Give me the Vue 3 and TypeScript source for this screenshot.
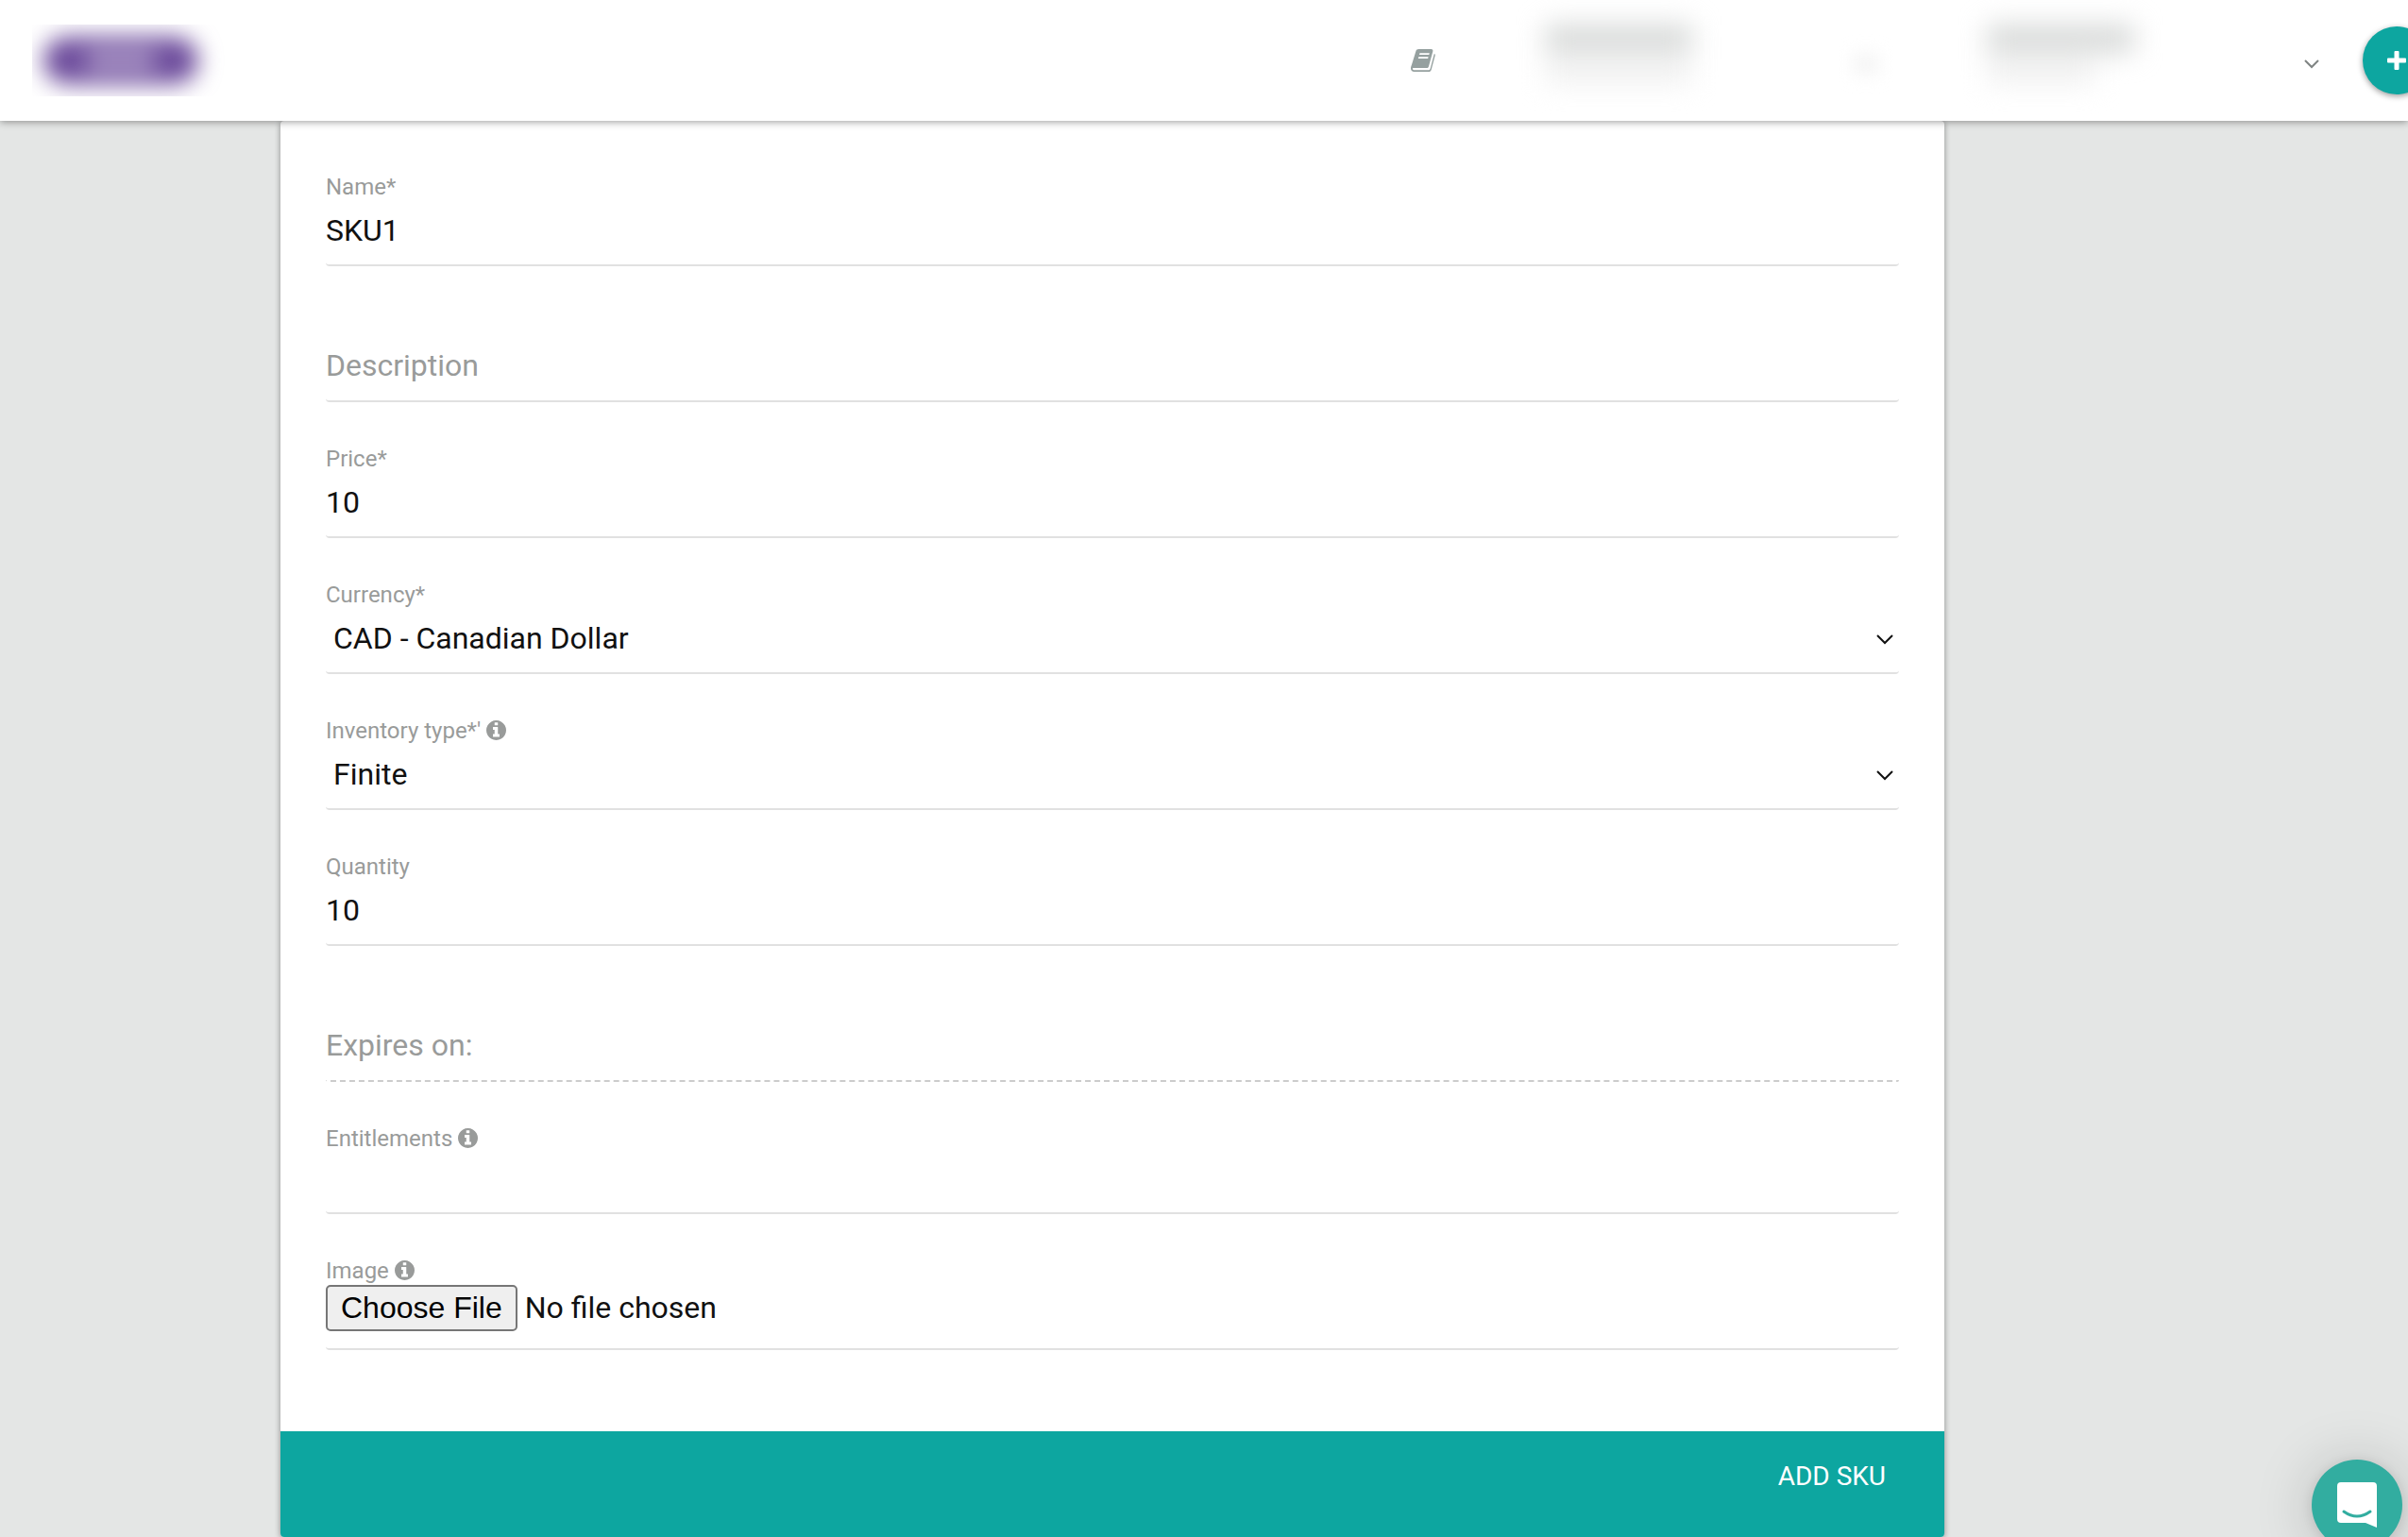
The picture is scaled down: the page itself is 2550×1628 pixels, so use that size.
<script setup lang="ts">
import { ref } from 'vue'

interface Field {
  id: string
  label: string
  kind: 'text' | 'select' | 'file'
  value?: string
  info?: boolean
  floating?: boolean
  modifier?: string
}

const fields = ref<Field[]>([
  { id: 'name', label: 'Name*', kind: 'text', value: 'SKU1' },
  { id: 'description', label: 'Description', kind: 'text', value: '', floating: true },
  { id: 'price', label: 'Price*', kind: 'text', value: '10' },
  { id: 'currency', label: 'Currency*', kind: 'select', value: 'CAD - Canadian Dollar' },
  { id: 'inventory', label: "Inventory type*'", kind: 'select', value: 'Finite', info: true },
  { id: 'quantity', label: 'Quantity', kind: 'text', value: '10' },
  { id: 'expires', label: 'Expires on:', kind: 'text', value: '', floating: true, modifier: 'dashed' },
  { id: 'entitlements', label: 'Entitlements', kind: 'text', value: '', info: true, modifier: 'short' },
  { id: 'image', label: 'Image', kind: 'file', info: true },
])
</script>

<template>
  <div class="page">
    <header class="topbar">
      <div class="logo" aria-label="Logo"><span class="logo-pill"><span class="logo-mark"></span></span></div>
      <nav class="tools">
        <a class="docs" href="#" aria-label="Documentation">
          <svg viewBox="0 0 26 24" width="26" height="24">
            <path fill="#95a09f" fill-rule="evenodd" d="M8.500 0H21.500C23 0 23.700 1 23.300 2.400L19 18.200C18.600 19.500 18 20 16.700 20H3C2 20 1.700 20.500 2 21.200C2.300 22 3 22.300 4 22.300H18.500C19.700 22.300 20.300 21.800 20.700 20.500L24.800 5C25.800 5.400 26 6 25.700 7L21.800 21.400C21.300 23.200 20.300 24 18.700 24H3.600C1.500 24 0 22.500 0 20.400C0 19 .5 18 .9 16.800L5.300 2.400C5.800 .8 6.800 0 8.500 0ZM9.500 4.200L9 6H19.300L19.800 4.200ZM8.300 8.200L7.800 10H18.100L18.600 8.200Z" />
          </svg>
        </a>
        <div class="account" aria-hidden="true">
          <div class="redacted"><i class="bar"></i><i class="bar thin"></i></div>
          <i class="dot"></i>
        </div>
        <div class="account">
          <div class="redacted" aria-hidden="true"><i class="bar"></i><i class="bar thin narrow"></i></div>
          <button class="toggle" type="button" aria-label="Open account menu">
            <svg viewBox="0 0 16 10" width="16" height="10"><path d="M1 1l7 7 7-7" fill="none" stroke="#7f8483" stroke-width="2" /></svg>
          </button>
        </div>
        <button class="create" type="button" aria-label="Create">
          <svg viewBox="0 0 20 20" width="20" height="20"><path fill="#fff" d="M8.500 0h3q1 0 1 1v6.500H19q1 0 1 1v3q0 1-1 1h-6.500V19q0 1-1 1h-3q-1 0-1-1v-6.500H1q-1 0-1-1v-3q0-1 1-1h6.500V1q0-1 1-1z" /></svg>
        </button>
      </nav>
    </header>

    <main class="content">
      <form class="card" @submit.prevent>
        <div class="fields">
          <div v-for="f in fields" :key="f.id" class="field" :class="[f.modifier, { floating: f.floating }]">
            <label v-if="!f.floating" class="label" :for="f.id">
              <span>{{ f.label }}</span>
              <svg v-if="f.info" class="info" viewBox="128 128 1536 1536" width="21" height="21">
                <path fill="currentColor" d="M1152 1376v-160q0-14-9-23t-23-9h-96v-512q0-14-9-23t-23-9h-320q-14 0-23 9t-9 23v160q0 14 9 23t23 9h96v320h-96q-14 0-23 9t-9 23v160q0 14 9 23t23 9h448q14 0 23-9t9-23zM1024 480v-160q0-14-9-23t-23-9h-192q-14 0-23 9t-9 23v160q0 14 9 23t23 9h192q14 0 23-9t9-23zM1664 896q0 209-103 385.500t-279.500 279.500-385.500 103-385.500-103-279.500-279.500-103-385.500 103-385.500 279.500-279.500 385.500-103 385.500 103 279.500 279.500 103 385.500z" />
              </svg>
            </label>
            <input
              v-if="f.kind === 'text'"
              :id="f.id"
              v-model="f.value"
              class="control"
              type="text"
              :placeholder="f.floating ? f.label : undefined"
              :aria-label="f.floating ? f.label : undefined"
            />
            <div v-else-if="f.kind === 'select'" class="select">
              <select :id="f.id" v-model="f.value" class="control">
                <option>{{ f.value }}</option>
              </select>
              <svg class="arrow" viewBox="0 0 18 11" width="18" height="11"><path d="M1 1l8 8 8-8" fill="none" stroke="#111" stroke-width="2" /></svg>
            </div>
            <input v-else :id="f.id" class="control file" type="file" />
          </div>
        </div>
        <footer class="actions">
          <button class="submit" type="submit">ADD SKU</button>
        </footer>
      </form>
    </main>

    <button class="messenger" type="button" aria-label="Open chat">
      <svg viewBox="0 0 42 48" width="42" height="48">
        <path fill="#fff" d="M4 0h34q4 0 4 4v44l-12-5H4q-4 0-4-4V4q0-4 4-4z" />
        <path d="M7 31q14 10 28 0" fill="none" stroke="#32ada0" stroke-width="3" stroke-linecap="round" />
      </svg>
    </button>
  </div>
</template>

<style>
body {
  margin: 0;
  background: #e4e6e5;
}
</style>

<style scoped>
.page {
  position: relative;
  height: 100vh;
  overflow: hidden;
  display: flex;
  flex-direction: column;
  font-family: Roboto, "Liberation Sans", sans-serif;
  color: #111;
  background: #e4e6e5;
}
.page *,
.page *::before {
  box-sizing: border-box;
}
button {
  border: 0;
  padding: 0;
  background: none;
  font: inherit;
}
.topbar {
  position: relative;
  z-index: 1;
  flex: none;
  height: 128px;
  display: flex;
  justify-content: space-between;
  align-items: center;
  padding-left: 34px;
  background: #fff;
  box-shadow: 0 1px 8px rgba(0, 0, 0, 0.4);
}
.logo {
  width: 206px;
  height: 76px;
  display: flex;
  align-items: center;
  padding: 0 12px;
  overflow: hidden;
}
.logo-pill {
  width: 164px;
  height: 50px;
  padding: 16px 46px;
  border-radius: 25px;
  background: #6d4c9c;
  filter: blur(12px);
}
.logo-mark {
  display: block;
  height: 18px;
  background: #b9a8d0;
}
.tools {
  display: flex;
  align-items: center;
}
.docs {
  display: flex;
  margin-right: 116px;
}
.account {
  width: 398px;
  height: 128px;
  display: flex;
  justify-content: space-between;
  align-items: center;
  padding-right: 46px;
}
.account + .account {
  margin-left: 70px;
}
.redacted {
  height: 76px;
  display: flex;
  flex-direction: column;
  gap: 8px;
  filter: blur(14px);
}
.bar {
  display: block;
  width: 156px;
  height: 30px;
  background: #d8dad9;
}
.thin {
  height: 24px;
  background: #f0f0f0;
}
.narrow {
  width: 116px;
}
.dot {
  width: 24px;
  height: 16px;
  margin-top: 8px;
  background: #eee;
  filter: blur(10px);
}
.toggle {
  display: flex;
  margin-top: 8px;
}
.create {
  width: 72px;
  height: 72px;
  margin-right: -24px;
  display: flex;
  justify-content: center;
  align-items: center;
  border-radius: 50%;
  background: #0da6a0;
  box-shadow: 0 2px 6px rgba(0, 0, 0, 0.4);
}
.content {
  flex: 1;
  display: flex;
  padding: 0 491px 0 297px;
}
.card {
  flex: 1;
  display: flex;
  flex-direction: column;
  align-self: flex-start;
  border-radius: 4px;
  background: #fff;
  box-shadow: 0 1px 6px rgba(0, 0, 0, 0.4);
}
.fields {
  padding: 10px 48px 86px;
}
.field {
  padding-top: 46px;
}
.floating {
  padding-top: 74px;
}
.label {
  display: flex;
  align-items: center;
  gap: 6px;
  height: 28px;
  font-size: 24px;
  line-height: 28px;
  color: #999b9a;
}
.info {
  margin-bottom: 2px;
}
.control {
  display: block;
  width: 100%;
  height: 70px;
  margin: 0;
  padding: 0 0 4px;
  border: 0 solid #e1e1e1;
  border-bottom-width: 2px;
  border-radius: 4px;
  outline: 0;
  background: transparent;
  font-family: inherit;
  font-size: 32px;
  color: #111;
}
.control::placeholder {
  color: #999b9a;
  opacity: 1;
}
.floating .control {
  padding-bottom: 6px;
}
.short .control {
  height: 66px;
}
.dashed .control {
  border-bottom-style: dashed;
  border-color: #ccc;
  border-radius: 2px;
}
.select {
  position: relative;
}
.select .control {
  appearance: none;
  padding-left: 8px;
}
.arrow {
  position: absolute;
  right: 6px;
  top: 28px;
  pointer-events: none;
}
.file {
  padding: 0;
}
.file::file-selector-button {
  box-sizing: border-box;
  height: 49px;
  margin: 1px 8px 0 0;
  padding: 0 14px;
  border: 2px solid #767676;
  border-radius: 5px;
  background: #efefef;
  font-family: "Liberation Sans", Arial, sans-serif;
  font-size: 32px;
  color: #000;
}
.actions {
  height: 112px;
  display: flex;
  justify-content: flex-end;
  align-items: flex-start;
  padding: 32px 62px;
  border-radius: 0 0 4px 4px;
  background: #0da6a0;
}
.submit {
  font-size: 28px;
  line-height: 32px;
  color: #fff;
}
.messenger {
  position: absolute;
  right: 6px;
  bottom: -14px;
  width: 96px;
  height: 96px;
  display: flex;
  justify-content: center;
  align-items: center;
  border-radius: 50%;
  background: #32ada0;
  box-shadow: 0 2px 12px rgba(0, 0, 0, 0.1), 0 4px 64px rgba(0, 0, 0, 0.2);
}
</style>
